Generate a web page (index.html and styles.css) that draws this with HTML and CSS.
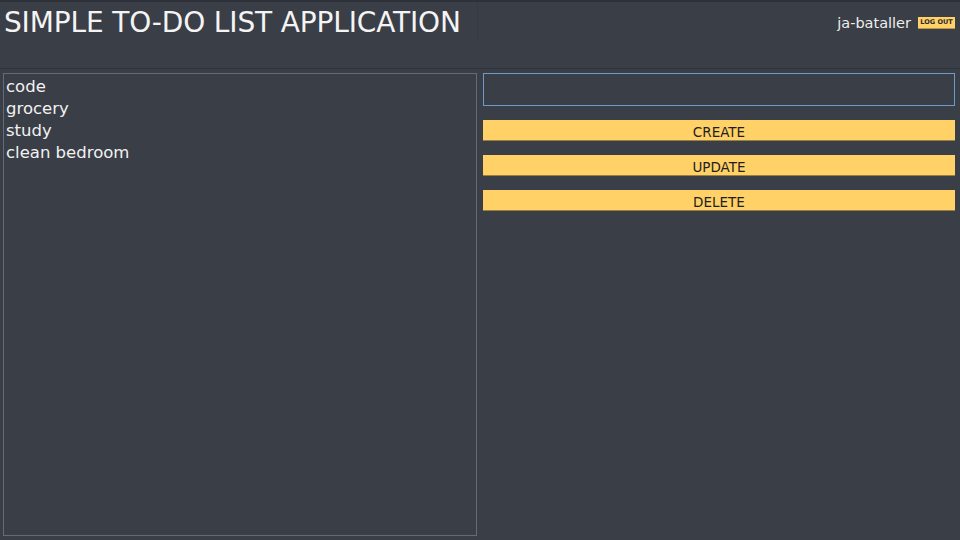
FILE: index.html
```html
<!DOCTYPE html>
<html>
<head>
<meta charset="utf-8">
<link rel="stylesheet" href="styles.css">
</head>
<body>
<header class="header">
  <div class="title-wrap"><h1 class="title">SIMPLE TO-DO LIST APPLICATION</h1></div>
  <div class="user">
    <span class="username">ja-bataller</span>
    <button class="logout">LOG OUT</button>
  </div>
</header>
<main class="main">
  <ul class="list">
    <li>code</li>
    <li>grocery</li>
    <li>study</li>
    <li>clean bedroom</li>
  </ul>
  <div class="controls">
    <input class="task-input" type="text">
    <button class="btn">CREATE</button>
    <button class="btn">UPDATE</button>
    <button class="btn">DELETE</button>
  </div>
</main>
</body>
</html>
```
FILE: styles.css
```css
html, body {
  margin: 0;
  padding: 0;
  background: #3a3e47;
  font-family: "DejaVu Sans", Verdana, sans-serif;
  color: #f2f2f2;
  width: 960px;
  height: 540px;
  overflow: hidden;
}
.header {
  display: flex;
  align-items: flex-start;
  height: 66px;
  border-top: 2px solid #2e3139;
  border-bottom: 1px solid #30343b;
}
.title-wrap {
  width: 477px;
  height: 40px;
  border-right: 1px solid #363a42;
  display: flex;
  align-items: center;
}
.title {
  margin: 0 0 0 4px;
  font-weight: normal;
  font-size: 28px;
  letter-spacing: -0.15px;
  color: #f4f4f4;
  white-space: nowrap;
}
.user {
  flex: 1;
  display: flex;
  justify-content: flex-end;
  align-items: center;
  height: 42px;
  padding-right: 5px;
}
.username {
  font-size: 14.5px;
  color: #eeeeee;
  margin-right: 7px;
}
.logout {
  font-family: "DejaVu Sans", Verdana, sans-serif;
  font-size: 6.5px;
  font-weight: bold;
  white-space: nowrap;
  background: #ffd166;
  color: #2a2a2a;
  border: none;
  border-bottom: 1px solid #b8944a;
  padding: 0;
  width: 37px;
  height: 12px;
  line-height: 11px;
}
.main {
  display: flex;
  gap: 6px;
  padding: 4px 0 0 3px;
}
.list {
  list-style: none;
  margin: 0;
  padding: 2px 2px;
  width: 468px;
  height: 457px;
  border: 1px solid #666a72;
  font-size: 16.5px;
  line-height: 22px;
  color: #f2f2f2;
}
.controls {
  width: 472px;
  display: flex;
  flex-direction: column;
}
.task-input {
  box-sizing: border-box;
  height: 33px;
  width: 472px;
  background: #3a3e47;
  border: 1px solid #6b9bc6;
  outline: none;
  margin: 0 0 14px 0;
}
.btn {
  box-sizing: border-box;
  height: 21px;
  width: 472px;
  margin: 0 0 14px 0;
  background: #ffd166;
  border: none;
  border-bottom: 1px solid #9c7e3e;
  font-family: "DejaVu Sans", Verdana, sans-serif;
  font-size: 13.5px;
  color: #1e1e1e;
  padding: 3px 0 0 0;
  line-height: 16px;
}
```
